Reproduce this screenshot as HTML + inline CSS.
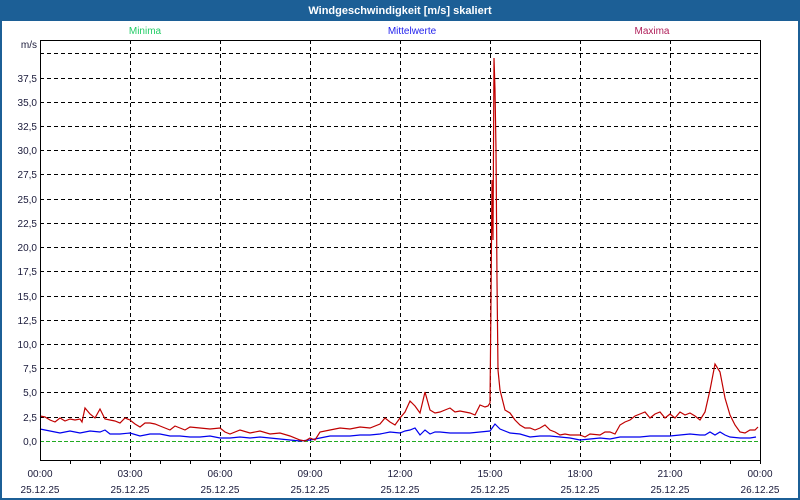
<!DOCTYPE html>
<html><head><meta charset="utf-8"><style>
body{margin:0;width:800px;height:500px;overflow:hidden;background:#fff}
svg{display:block;font-family:"Liberation Sans",Tahoma,sans-serif}
</style></head><body>
<svg width="800" height="500" viewBox="0 0 800 500">
<rect x="0" y="0" width="800" height="500" fill="#1c5f96"/>
<rect x="2" y="21" width="796" height="477" fill="#fff"/>
<text x="400" y="14" fill="#fff" font-size="11" font-weight="bold" text-anchor="middle">Windgeschwindigkeit [m/s] skaliert</text>
<text x="145" y="34" fill="#22cc66" font-size="10" text-anchor="middle">Minima</text>
<text x="412" y="34" fill="#2222ee" font-size="10" text-anchor="middle">Mittelwerte</text>
<text x="652" y="34" fill="#b0205a" font-size="10" text-anchor="middle">Maxima</text>
<g stroke="#000" stroke-width="1" stroke-dasharray="4,3" fill="none">
<path d="M40 53.5H760M40 78.5H760M40 102.5H760M40 126.5H760M40 150.5H760M40 174.5H760M40 199.5H760M40 223.5H760M40 247.5H760M40 271.5H760M40 296.5H760M40 320.5H760M40 344.5H760M40 368.5H760M40 392.5H760M40 417.5H760"/>
<path d="M130.5 40V460M220.5 40V460M310.5 40V460M400.5 40V460M490.5 40V460M580.5 40V460M670.5 40V460"/>
</g>
<g fill="#1a1a3a" font-size="10" text-anchor="end">
<text x="37" y="48">m/s</text>
<text x="37" y="82">37,5</text><text x="37" y="106">35,0</text><text x="37" y="130">32,5</text><text x="37" y="154">30,0</text><text x="37" y="178">27,5</text><text x="37" y="203">25,0</text><text x="37" y="227">22,5</text><text x="37" y="251">20,0</text><text x="37" y="275">17,5</text><text x="37" y="300">15,0</text><text x="37" y="324">12,5</text><text x="37" y="348">10,0</text><text x="37" y="372">7,5</text><text x="37" y="396">5,0</text><text x="37" y="421">2,5</text><text x="37" y="445">0,0</text>
</g>
<line x1="40" y1="441.5" x2="760" y2="441.5" stroke="#22aa22" stroke-dasharray="4,2"/>
<polyline fill="none" stroke="#0000ee" stroke-width="1.2" points="40,429 50,431 60,433 70,431 80,433 90,431 100,432 105,430 110,434 120,434 130,433 140,436 150,434 160,434 170,436 180,436 190,437 200,437 210,436 220,438 230,438 240,437 250,438 260,437 270,438 280,439 290,440 300,441 310,440 320,438 330,436 340,436 350,436 360,435 370,435 380,434 390,432 400,433 405,431 410,430 415,428 420,435 425,430 430,434 435,432 440,432 450,433 460,433 470,433 480,432 490,431 495,424 500,429 510,433 520,434 530,437 540,436 550,436 560,437 570,438 580,440 590,439 600,438 610,439 620,437 630,437 640,437 650,436 660,436 670,436 680,435 690,434 700,435 705,435 710,432 715,435 720,432 725,435 730,437 740,438 750,438 756,437"/>
<polyline fill="none" stroke="#c00000" stroke-width="1.2" points="40,416 45,417 50,420 55,422 60,418 65,421 70,419 75,420 80,419 82,422 85,408 90,414 95,418 100,409 105,419 110,420 115,421 120,423 125,418 130,420 135,424 140,427 145,423 150,423 155,424 160,426 165,428 170,430 175,426 180,428 185,430 190,427 200,428 210,429 220,428 225,432 230,434 240,430 250,433 260,431 270,434 280,433 290,436 300,440 305,441 310,438 315,440 320,432 330,430 340,428 350,429 360,427 370,428 380,424 385,418 390,422 395,425 400,418 405,412 410,401 415,406 420,413 425,392 430,410 435,413 440,412 445,410 450,408 455,412 460,411 470,413 475,415 480,405 485,407 488,406 490,403 491,300 492,180 493,240 494,58 495,90 496,150 497,280 498,370 500,390 505,410 510,413 515,420 520,425 525,428 530,428 535,430 540,428 545,425 550,430 555,432 560,435 565,434 570,435 580,435 585,437 590,434 600,435 605,432 610,432 615,434 620,425 625,422 630,420 635,416 640,414 645,412 650,418 655,414 660,412 665,418 670,414 675,418 680,412 685,415 690,413 695,416 700,420 705,412 710,390 715,364 720,372 725,398 730,415 735,425 740,432 745,433 750,430 755,430 758,427"/>
<rect x="40.5" y="40.5" width="720" height="420" fill="none" stroke="#000"/>
<path d="M70.5 460v4M100.5 460v4M130.5 460v4M160.5 460v4M190.5 460v4M220.5 460v4M250.5 460v4M280.5 460v4M310.5 460v4M340.5 460v4M370.5 460v4M400.5 460v4M430.5 460v4M460.5 460v4M490.5 460v4M520.5 460v4M550.5 460v4M580.5 460v4M610.5 460v4M640.5 460v4M670.5 460v4M700.5 460v4M730.5 460v4M760.5 460v4" stroke="#000"/>
<g fill="#1a1a3a" font-size="10" text-anchor="middle">
<text x="40" y="477">00:00</text><text x="130" y="477">03:00</text><text x="220" y="477">06:00</text><text x="310" y="477">09:00</text><text x="400" y="477">12:00</text><text x="490" y="477">15:00</text><text x="580" y="477">18:00</text><text x="670" y="477">21:00</text><text x="760" y="477">00:00</text>
<text x="40" y="493">25.12.25</text><text x="130" y="493">25.12.25</text><text x="220" y="493">25.12.25</text><text x="310" y="493">25.12.25</text><text x="400" y="493">25.12.25</text><text x="490" y="493">25.12.25</text><text x="580" y="493">25.12.25</text><text x="670" y="493">25.12.25</text><text x="760" y="493">26.12.25</text>
</g>
</svg>
</body></html>
